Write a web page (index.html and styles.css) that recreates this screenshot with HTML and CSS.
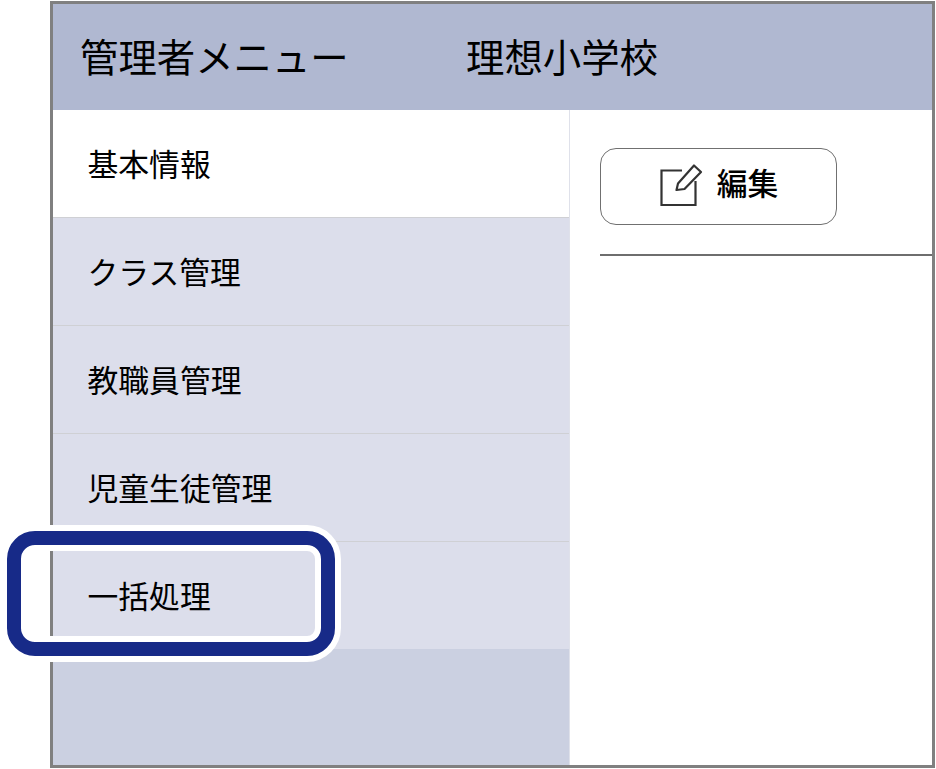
FILE: index.html
```html
<!DOCTYPE html>
<html lang="ja">
<head>
<meta charset="utf-8">
<title>管理者メニュー</title>
<link rel="stylesheet" href="styles.css">
</head>
<body>
<div class="frame">
  <header class="topbar">
    <span class="title">管理者メニュー</span>
    <span class="school">理想小学校</span>
  </header>
  <div class="body">
    <nav class="side">
      <a class="item active">基本情報</a>
      <a class="item">クラス管理</a>
      <a class="item">教職員管理</a>
      <a class="item">児童生徒管理</a>
      <a class="item">一括処理</a>
    </nav>
    <main class="main">
      <div class="toolbar">
        <button class="edit">
          <svg class="icon" viewBox="0 0 42 42" width="42" height="42" fill="none" stroke="#333" stroke-width="2.200">
            <path d="M22 6.500H1.500V41H35.500V17"/>
            <path d="M16.500 26L18 19.500L34 1.500L41 8L24.500 25Z" stroke-linejoin="round"/>
          </svg>
          <span class="edit-label">編集</span>
        </button>
      </div>
    </main>
  </div>
</div>
<div class="callout"></div>
</body>
</html>
```
FILE: styles.css
```css
* { box-sizing: border-box; }
html, body { margin: 0; padding: 0; background: #fff; }
body {
  width: 936px;
  height: 769px;
  overflow: hidden;
  padding: 1px 1px 0 50px;
  font-family: "Noto Sans CJK JP", "Noto Sans", sans-serif;
  color: #000;
}
.frame {
  width: 885px;
  height: 767px;
  border: 3px solid #808080;
  display: flex;
  flex-direction: column;
}
.topbar {
  height: 106px;
  flex: none;
  background: #b0b8d1;
  display: flex;
  align-items: center;
  padding: 0 0 3px 27px;
  font-size: 38.400px;
  line-height: 1;
}
.title { width: 386px; }
.body { flex: 1; display: flex; min-height: 0; }
.side {
  width: 517px;
  flex: none;
  background: #cbd0e1;
  border-right: 1px solid #dfe1ea;
}
.item {
  display: flex;
  align-items: center;
  height: 108px;
  padding: 0 0 0 34.500px;
  font-size: 30.800px;
  line-height: 1;
  background: #dcdeeb;
  border-bottom: 1px solid #cfd0d4;
}
.item.active { background: #fff; }
.item:last-child { border-bottom: 0; height: 107px; }
.main { flex: 1; background: #fff; padding: 38px 0 0 30px; }
.toolbar { border-bottom: 2px solid #6e6e6e; height: 108px; }
.edit {
  width: 237px;
  height: 77px;
  background: #fff;
  border: 1.500px solid #707070;
  border-radius: 16px;
  display: flex;
  align-items: center;
  justify-content: center;
  gap: 15px;
  padding: 0 0 0 1px;
  font: inherit;
  font-size: 30.800px;
  font-weight: 500;
  line-height: 1;
  color: #000;
}
.icon { margin-bottom: 3px; overflow: visible; }
.edit-label { padding-bottom: 8px; }
.callout {
  position: absolute;
  left: 7px;
  top: 531px;
  width: 328px;
  height: 125px;
  border: 14px solid #172a88;
  border-radius: 28px;
  box-shadow: 0 0 0 6px #fff, inset 0 0 0 6px #fff;
}
```
